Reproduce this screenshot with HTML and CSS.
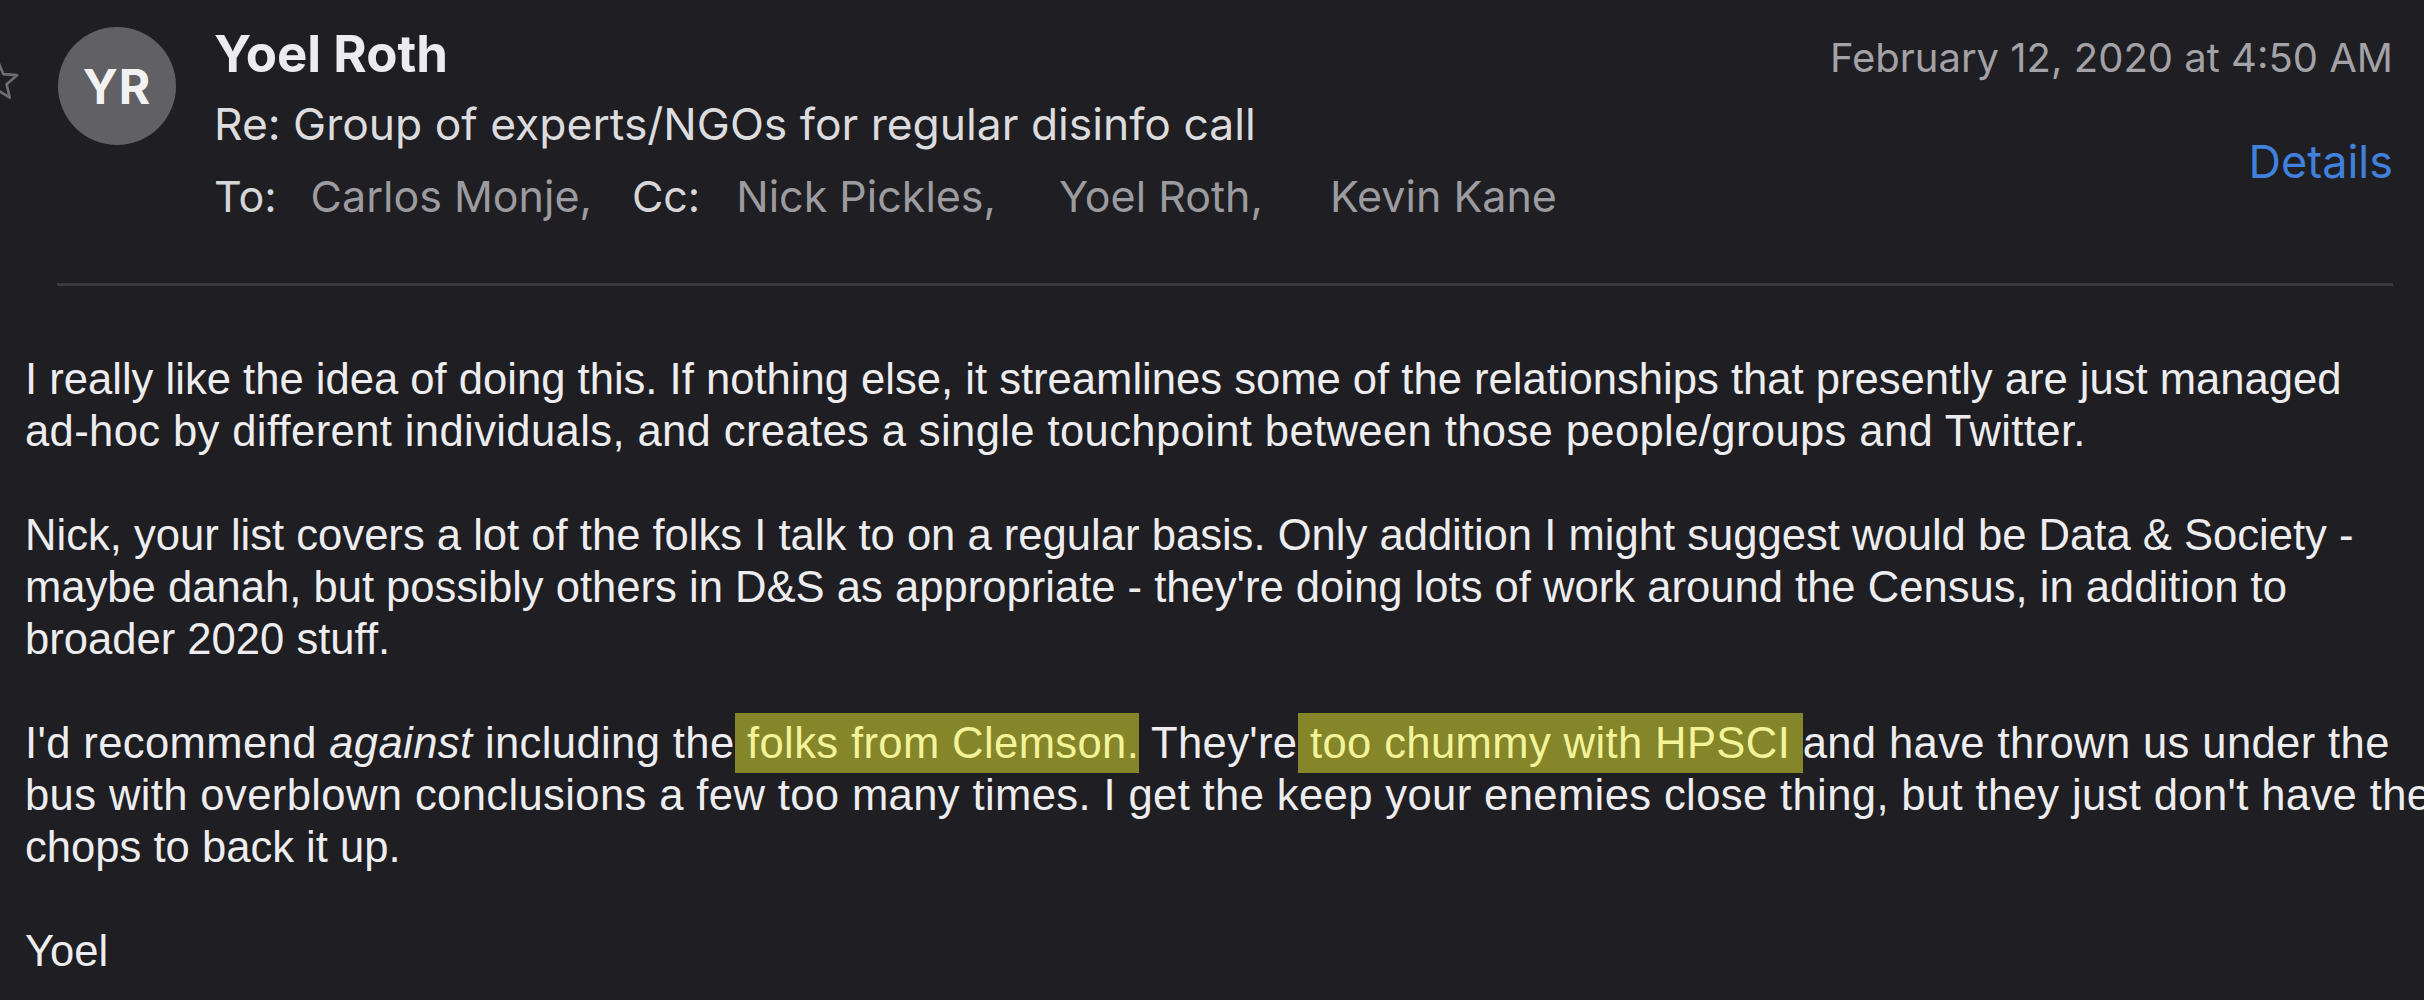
FILE: index.html
```html
<!DOCTYPE html>
<html lang="en">
<head>
<meta charset="utf-8">
<title>Re: Group of experts/NGOs for regular disinfo call</title>
<link rel="stylesheet" href="styles.css">
</head>
<body>
<div class="mail">
  <header class="head">
    <svg class="star" viewBox="0 0 40 40" width="44" height="44" aria-hidden="true">
      <path d="M20 3 L24.8 14.6 L37.3 15.6 L27.8 23.8 L30.7 36 L20 29.5 L9.3 36 L12.2 23.8 L2.7 15.6 L15.2 14.6 Z" fill="none" stroke="#6e6d72" stroke-width="2.4" stroke-linejoin="round"/>
    </svg>
    <div class="avatar">YR</div>
    <div class="info">
      <div class="name">Yoel Roth</div>
      <div class="subject">Re: Group of experts/NGOs for regular disinfo call</div>
      <div class="recips"><span class="lbl">To:</span><span class="who">Carlos Monje,</span><span class="lbl cc">Cc:</span><span class="who">Nick Pickles,</span><span class="who next">Yoel Roth,</span><span class="who last">Kevin Kane</span></div>
    </div>
    <div class="meta">
      <div class="date">February 12, 2020 at 4:50 AM</div>
      <div class="details">Details</div>
    </div>
  </header>
  <div class="rule"></div>
  <div class="body">
    <p>I really like the idea of doing this. If nothing else, it streamlines some of the relationships that presently are just managed<br><span class="wide">ad-hoc by different individuals, and creates a single touchpoint between those people/groups and Twitter.</span></p>
    <p>Nick, your list covers a lot of the folks I talk to on a regular basis. Only addition I might suggest would be Data &amp; Society -<br>maybe danah, but possibly others in D&amp;S as appropriate - they're doing lots of work around the Census, in addition to<br>broader 2020 stuff.</p>
    <p><span class="wide">I'd recommend <em>against</em> including the<mark> folks from Clemson.</mark> They're<mark> too chummy with HPSCI </mark>and have thrown us under the</span><br><span class="wide">bus with overblown conclusions a few too many times. I get the keep your enemies close thing, but they just don't have the</span><br>chops to back it up.</p>
    <p>Yoel</p>
  </div>
</div>
</body>
</html>
```

FILE: styles.css
```css
html, body {
  margin: 0;
  padding: 0;
  background: #1f1e23;
  overflow: hidden;
}

.mail {
  width: 2424px;
  height: 1000px;
  overflow: hidden;
  color: #e6e6e8;
}

.head {
  display: flex;
  align-items: flex-start;
  padding: 0 31px 0 0;
  height: 283px;
  box-sizing: border-box;
  font-family: Inter, "Liberation Sans", sans-serif;
}

.star {
  flex: none;
  margin-left: -24px;
  margin-top: 58px;
}

.avatar {
  flex: none;
  width: 118px;
  height: 118px;
  margin-top: 27px;
  margin-left: 38px;
  border-radius: 50%;
  background: #616064;
  color: #f2f2f2;
  font-weight: 700;
  font-size: 48px;
  letter-spacing: 1px;
  display: flex;
  align-items: center;
  justify-content: center;
}

.info {
  flex: 1;
  margin-left: 38px;
  padding-top: 23px;
}

.name {
  font-size: 51px;
  font-weight: 700;
  line-height: 62px;
  color: #ececee;
}

.subject {
  font-size: 44.4px;
  line-height: 62px;
  margin-top: 8px;
  color: #dcdcde;
}

.recips {
  font-size: 43px;
  line-height: 62px;
  margin-top: 10px;
  color: #9c9ba0;
  white-space: nowrap;
}

.lbl {
  color: #d6d6d8;
  margin-right: 34px;
}

.cc {
  margin-left: 40px;
  margin-right: 36px;
}

.next {
  margin-left: 63px;
}

.last {
  margin-left: 67px;
}

.meta {
  flex: none;
  text-align: right;
  padding-top: 27px;
}

.date {
  font-size: 40px;
  line-height: 62px;
  color: #a3a2a7;
}

.details {
  margin-top: 42px;
  font-size: 45px;
  line-height: 62px;
  color: #4181de;
}

.rule {
  height: 3px;
  margin: 0 31px 0 57px;
  background: #3a393e;
}

.body {
  padding: 67px 0 0 25px;
  font-family: "Liberation Sans", Arial, sans-serif;
  font-size: 43.6px;
  line-height: 52px;
  white-space: nowrap;
  color: #ededef;
}

.body p {
  margin: 0 0 52px 0;
}

.body em {
  font-style: italic;
}

.wide {
  letter-spacing: 0.37px;
}

mark {
  background: #85852a;
  color: #f3f39a;
  padding: 6px 0;
}
```
